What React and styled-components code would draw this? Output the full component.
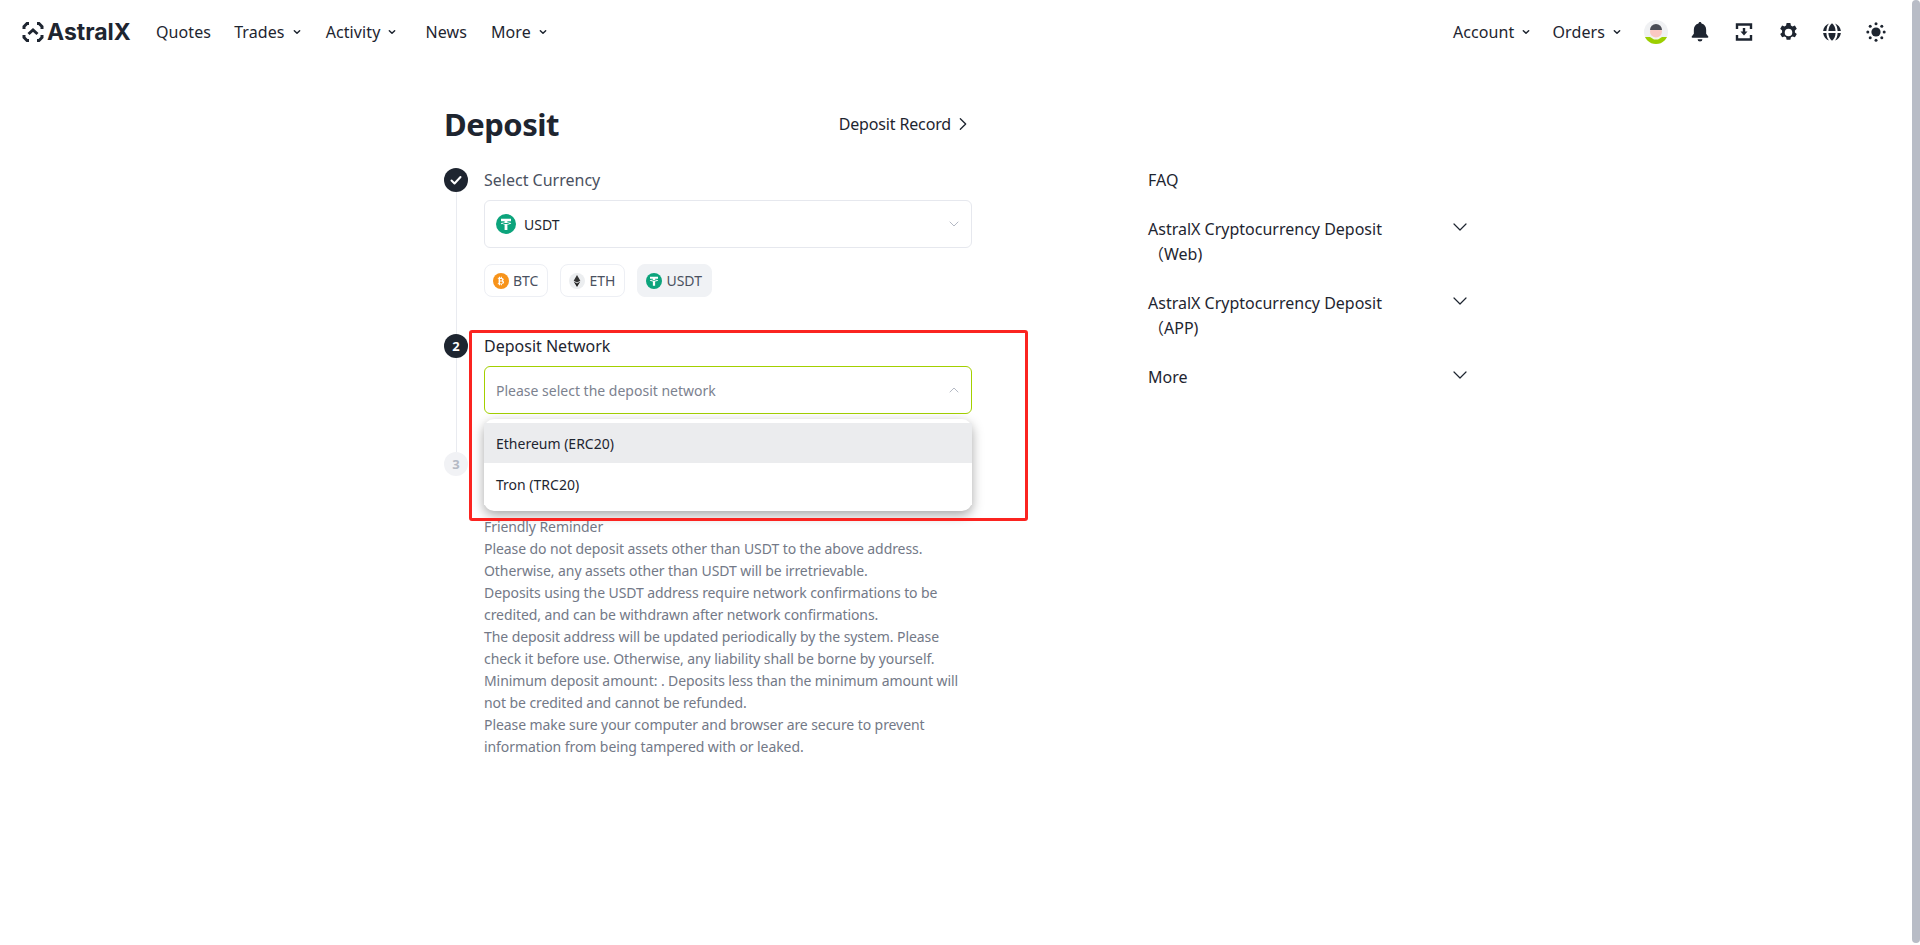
import React from "react";
import styled, { createGlobalStyle } from "styled-components";

const GlobalStyle = createGlobalStyle`
  html, body {
    margin: 0;
    padding: 0;
    background: #fff;
    overflow: hidden;
  }
  body {
    font-family: "Noto Sans", "Open Sans", "Liberation Sans", "Noto Sans CJK SC", sans-serif;
    color: #1e2530;
  }
  * { box-sizing: border-box; }
`;

const Page = styled.div`
  position: relative;
  width: 1920px;
  height: 945px;
  overflow: hidden;
`;

const ScrollThumb = styled.div`
  position: absolute;
  top: 0;
  right: 0;
  width: 8px;
  height: 943px;
  border-radius: 4px;
  background: #b8bcc6;
`;

const Header = styled.header`
  display: flex;
  align-items: center;
  justify-content: space-between;
  height: 64px;
  padding: 0 32px 0 22px;
`;

const NavLeft = styled.nav`
  display: flex;
  align-items: center;
`;

const NavRight = styled.div`
  display: flex;
  align-items: center;
`;

const Logo = styled.div`
  display: flex;
  align-items: center;
  gap: 3px;
  width: 134px;
  font-family: "Inter", sans-serif;
  font-size: 23px;
  font-weight: 700;
  color: #1e2530;
`;

const NavItem = styled.a`
  display: flex;
  align-items: center;
  gap: 8px;
  font-size: 16px;
  letter-spacing: 0.1px;
  color: #1e2530;
  margin-right: ${(p) => p.$gap}px;
`;

const IconSlot = styled.span`
  display: flex;
  align-items: center;
  justify-content: center;
  width: 24px;
  height: 24px;
  margin-left: 20px;
`;

const Main = styled.main`
  display: flex;
  width: 1032px;
  margin: 0 auto;
  padding-top: 29px;
`;

const LeftColumn = styled.section`
  width: 528px;
`;

const TitleRow = styled.div`
  display: flex;
  align-items: center;
  justify-content: space-between;
  height: 62px;
  margin-bottom: 13px;
`;

const Title = styled.h1`
  margin: 0;
  font-size: 31px;
  line-height: 62px;
  font-weight: 700;
  letter-spacing: -0.5px;
  color: #1e2530;
`;

const RecordLink = styled.a`
  display: flex;
  align-items: center;
  gap: 4px;
  padding-right: 1px;
  font-size: 16px;
  letter-spacing: -0.15px;
  color: #1e2530;
`;

const Step = styled.div`
  display: grid;
  grid-template-columns: 24px 1fr;
  column-gap: 16px;
  min-height: ${(p) => p.$height}px;
`;

const Rail = styled.div`
  display: flex;
  flex-direction: column;
  align-items: center;
`;

const RailLine = styled.div`
  flex: 1;
  width: 1px;
  background: #e9ebf0;
`;

const StepDot = styled.div`
  display: flex;
  align-items: center;
  justify-content: center;
  flex: none;
  width: 24px;
  height: 24px;
  border-radius: 50%;
  font-size: 13px;
  font-weight: 700;
  background: ${(p) => (p.$muted ? "#f1f2f5" : "#1e2530")};
  color: ${(p) => (p.$muted ? "#b4b9c4" : "#fff")};
`;

const StepBody = styled.div`
  position: relative;
  width: 488px;
`;

const StepTitle = styled.div`
  font-size: 16px;
  line-height: 24px;
  color: ${(p) => (p.$soft ? "#4a5160" : "#1e2530")};
`;

const SelectBox = styled.div`
  display: flex;
  align-items: center;
  justify-content: space-between;
  height: 48px;
  margin-top: 8px;
  padding: 0 11px;
  border: 1px solid ${(p) => (p.$active ? "#a3d000" : "#e6e8ee")};
  border-radius: 6px;
  font-size: 14px;
  background: #fff;
`;

const SelectValue = styled.span`
  display: flex;
  align-items: center;
  gap: 8px;
  color: #1e2530;
`;

const Placeholder = styled.span`
  font-size: 14px;
  color: #7c828f;
`;

const Chips = styled.div`
  display: flex;
  gap: 12px;
  margin-top: 16px;
`;

const Chip = styled.div`
  display: flex;
  align-items: center;
  gap: 4px;
  height: 33px;
  padding: 0 9px 0 8px;
  font-size: 14px;
  color: #4a5160;
  border-radius: 8px;
  border: 1px solid ${(p) => (p.$active ? "#f0f2f5" : "#edeff4")};
  background: ${(p) => (p.$active ? "#f0f2f5" : "#fff")};
`;

const Dropdown = styled.ul`
  position: absolute;
  top: 85px;
  left: 0;
  z-index: 3;
  width: 100%;
  margin: 0;
  padding: 4px 0 6px;
  list-style: none;
  background: #fff;
  border-radius: 10px;
  box-shadow: 0 4px 12px rgba(0, 0, 0, 0.35);
`;

const Option = styled.li`
  display: flex;
  align-items: center;
  height: ${(p) => (p.$hover ? 40 : 42)}px;
  padding: 0 12px;
  font-size: 14px;
  color: #1e2530;
  background: ${(p) => (p.$hover ? "#ebecee" : "#fff")};
`;

const Reminder = styled.div`
  width: 488px;
  margin: 0 0 0 40px;
  padding-top: 40px;
  font-size: 14px;
  line-height: 22px;
  letter-spacing: -0.08px;
  color: #737987;
`;

const Highlight = styled.div`
  position: absolute;
  left: 469px;
  top: 330px;
  width: 559px;
  height: 191px;
  border: 3px solid #fb2420;
  border-radius: 3px;
  z-index: 5;
  pointer-events: none;
`;

const FaqColumn = styled.aside`
  width: 322px;
  margin-left: 176px;
  padding-top: 75px;
  font-size: 16px;
  line-height: 25px;
`;

const FaqHeading = styled.div`
  margin-bottom: 24px;
`;

const FaqRow = styled.div`
  display: flex;
  justify-content: space-between;
  align-items: flex-start;
  margin-bottom: 24px;
`;

const FaqText = styled.div`
  width: 270px;
`;

const FaqArrow = styled.span`
  display: flex;
  margin: 1px 1px 0 0;
`;

const chevronPaths = {
  up: "M2 8l4-4 4 4",
  down: "M2 4l4 4 4-4",
  right: "M4 2l4 4-4 4",
};

const Chevron = ({ dir = "down", size = 12, color = "#1e2530", width = 2 }) => (
  <svg width={size} height={size} viewBox="0 0 12 12" fill="none">
    <path
      d={chevronPaths[dir]}
      stroke={color}
      strokeWidth={width}
      strokeLinecap="round"
      strokeLinejoin="round"
    />
  </svg>
);

const NavCaret = () => <Chevron size={8} width={2.2} />;

const LogoMark = () => (
  <svg width="22" height="22" viewBox="0 0 22 22" fill="none" stroke="#1e2530" strokeWidth="3">
    <path d="M7 2.5H5L2 5.5V8" />
    <path d="M15 2.5h2l3 3V8" />
    <path d="M7 19.5H5l-3-3V14" />
    <path d="M15 19.5h2l3-3V14" />
    <path d="M6.5 13L11 9l4.5 4" />
  </svg>
);

const Avatar = () => (
  <svg width="24" height="24" viewBox="0 0 24 24">
    <defs>
      <clipPath id="avatarClip">
        <circle cx="12" cy="12" r="12" />
      </clipPath>
    </defs>
    <g clipPath="url(#avatarClip)">
      <rect width="24" height="24" fill="#f0f1f3" />
      <rect y="17" width="24" height="7" fill="#9ccf00" />
      <path d="M6 17h12l-4 2.5h-4z" fill="#f4f6e8" />
      <circle cx="12" cy="11.5" r="6" fill="#fbc8c3" />
      <path d="M6 10a6 6 0 0 1 12 0z" fill="#4a4d55" />
    </g>
  </svg>
);

const Bell = () => (
  <svg width="22" height="22" viewBox="0 0 20 20" fill="#1e2530">
    <path d="M10 1c.8 0 1.3.6 1.4 1.3C14 3 15.6 5.2 15.6 8v3.6l1.9 2.6c.3.5 0 1.1-.6 1.1H3.1c-.6 0-.9-.6-.6-1.1l1.9-2.6V8c0-2.8 1.6-5 4.2-5.7C8.7 1.6 9.2 1 10 1z" />
    <path d="M7.8 16.5h4.4a2.2 2.2 0 0 1-4.4 0z" />
  </svg>
);

const DepositIcon = () => (
  <svg width="18" height="18" viewBox="0 0 18 18" fill="none" stroke="#1e2530" strokeWidth="2.4">
    <path d="M2 6V1.5h14V6M2 12v4.5h14V12" />
    <path d="M9 5v5" />
    <path d="M5.5 8.5h7L9 12.5z" fill="#1e2530" stroke="none" />
  </svg>
);

const Gear = () => (
  <svg width="21" height="21" viewBox="0 0 20 20">
    <path
      fill="#1e2530"
      fillRule="evenodd"
      d="M8.2 1h3.6l.5 2.4 1.5.8 2.3-.8 1.8 3.1-1.8 1.6v1.8l1.8 1.6-1.8 3.1-2.3-.8-1.5.8-.5 2.4H8.2l-.5-2.4-1.5-.8-2.3.8-1.8-3.1 1.8-1.6V8.1L2.1 6.5l1.8-3.1 2.3.8 1.5-.8zM10 6.4a3.6 3.6 0 1 0 0 7.2 3.6 3.6 0 0 0 0-7.2z"
    />
  </svg>
);

const Globe = () => (
  <svg width="20" height="20" viewBox="0 0 20 20" fill="#1e2530">
    <path d="M7 1.4C3.9 2.5 1.5 5.4 1.1 9h3.3c.1-3 1-5.8 2.6-7.6z" />
    <path d="M13 1.4c1.6 1.8 2.5 4.6 2.6 7.6h3.3c-.4-3.6-2.8-6.5-5.9-7.6z" />
    <path d="M10 1.3C7.8 3 6.5 5.8 6.4 9h7.2C13.5 5.8 12.2 3 10 1.3z" />
    <path d="M1.1 11c.4 3.6 2.8 6.5 5.9 7.6-1.6-1.8-2.5-4.6-2.6-7.6z" />
    <path d="M6.4 11c.1 3.2 1.4 6 3.6 7.7 2.2-1.7 3.5-4.5 3.6-7.7z" />
    <path d="M15.6 11c-.1 3-1 5.8-2.6 7.6 3.1-1.1 5.5-4 5.9-7.6z" />
  </svg>
);

const Sun = () => (
  <svg width="20" height="20" viewBox="0 0 20 20" fill="#1e2530">
    <circle cx="10" cy="10" r="4.6" />
    <circle cx="10" cy="1.8" r="1.5" />
    <circle cx="10" cy="18.2" r="1.5" />
    <circle cx="1.8" cy="10" r="1.5" />
    <circle cx="18.2" cy="10" r="1.5" />
    <circle cx="4.2" cy="4.2" r="1.5" />
    <circle cx="15.8" cy="4.2" r="1.5" />
    <circle cx="4.2" cy="15.8" r="1.5" />
    <circle cx="15.8" cy="15.8" r="1.5" />
  </svg>
);

const Tether = ({ size }) => (
  <svg width={size} height={size} viewBox="0 0 20 20">
    <circle cx="10" cy="10" r="10" fill="#0ca47c" />
    <path d="M5 4.8h10v2.4h-3.6v1.3c2 .1 3.8.5 3.8 1s-1.8.9-3.8 1V16H8.6v-5.5c-2-.1-3.8-.5-3.8-1s1.8-.9 3.8-1V7.2H5z" fill="#fff" />
    <path d="M6.3 9.5c.8.3 2.2.5 3.7.5s2.9-.2 3.7-.5c-.8-.3-2.2-.4-3.7-.4s-2.900.1-3.7.4z" fill="#0ca47c" />
  </svg>
);

const Bitcoin = () => (
  <svg width="16" height="16" viewBox="0 0 16 16">
    <circle cx="8" cy="8" r="8" fill="#f7931a" />
    <path
      fill="#fff"
      fillRule="evenodd"
      d="M6 3.8h1v1h.9v-1h1v1.1c1.2.2 1.8.8 1.8 1.6 0 .6-.3 1-.8 1.3.7.2 1.1.8 1.1 1.5 0 1-.8 1.700-2.100 1.800v1.100h-1v-1h-.9v1H6v-1H4.800v-1h.8V5.800h-.8v-1H6zm1 2.100v1.700h1.300c.6 0 .9-.3.9-.9s-.3-.8-.9-.8zm0 2.700v1.900h1.500c.7 0 1-.3 1-1s-.3-.9-1-.9z"
    />
  </svg>
);

const Ethereum = () => (
  <svg width="16" height="16" viewBox="0 0 16 16">
    <circle cx="8" cy="8" r="8" fill="#eceef0" />
    <path d="M8 2l3.3 5.7L8 9.600 4.700 7.700z" fill="#343434" />
    <path d="M8 10.600l3.300-2L8 14l-3.300-5.400z" fill="#1e1e1e" />
  </svg>
);

const Check = () => (
  <svg width="14" height="14" viewBox="0 0 14 14" fill="none">
    <path d="M2.5 7.5l3 3 6-6.500" stroke="#fff" strokeWidth="2" strokeLinecap="round" strokeLinejoin="round" />
  </svg>
);

const reminders = [
  "Friendly Reminder",
  "Please do not deposit assets other than USDT to the above address.",
  "Otherwise, any assets other than USDT will be irretrievable.",
  "Deposits using the USDT address require network confirmations to be credited, and can be withdrawn after network confirmations.",
  "The deposit address will be updated periodically by the system. Please check it before use. Otherwise, any liability shall be borne by yourself.",
  "Minimum deposit amount: . Deposits less than the minimum amount will not be credited and cannot be refunded.",
  "Please make sure your computer and browser are secure to prevent information from being tampered with or leaked.",
];

const faqs = [
  ["AstralX Cryptocurrency Deposit", "（Web)"],
  ["AstralX Cryptocurrency Deposit", "（APP)"],
  ["More"],
];

export default function App() {
  return (
    <Page>
      <GlobalStyle />
      <Header>
        <NavLeft>
          <Logo>
            <LogoMark />
            AstralX
          </Logo>
          <NavItem $gap={23}>Quotes</NavItem>
          <NavItem $gap={25}>Trades <NavCaret /></NavItem>
          <NavItem $gap={29}>Activity <NavCaret /></NavItem>
          <NavItem $gap={24}>News</NavItem>
          <NavItem>More <NavCaret /></NavItem>
        </NavLeft>
        <NavRight>
          <NavItem $gap={22}>Account <NavCaret /></NavItem>
          <NavItem $gap={3}>Orders <NavCaret /></NavItem>
          <IconSlot><Avatar /></IconSlot>
          <IconSlot><Bell /></IconSlot>
          <IconSlot><DepositIcon /></IconSlot>
          <IconSlot><Gear /></IconSlot>
          <IconSlot><Globe /></IconSlot>
          <IconSlot><Sun /></IconSlot>
        </NavRight>
      </Header>
      <Main>
        <LeftColumn>
          <TitleRow>
            <Title>Deposit</Title>
            <RecordLink>
              Deposit Record
              <Chevron dir="right" size={16} width={1} />
            </RecordLink>
          </TitleRow>
          <Step $height={166}>
            <Rail>
              <StepDot><Check /></StepDot>
              <RailLine />
            </Rail>
            <StepBody>
              <StepTitle $soft>Select Currency</StepTitle>
              <SelectBox>
                <SelectValue><Tether size={20} />USDT</SelectValue>
                <Chevron size={12} width={1} color="#b4b9c4" />
              </SelectBox>
              <Chips>
                <Chip><Bitcoin />BTC</Chip>
                <Chip><Ethereum />ETH</Chip>
                <Chip $active><Tether size={16} />USDT</Chip>
              </Chips>
            </StepBody>
          </Step>
          <Step $height={118}>
            <Rail>
              <StepDot>2</StepDot>
              <RailLine />
            </Rail>
            <StepBody>
              <StepTitle>Deposit Network</StepTitle>
              <SelectBox $active>
                <Placeholder>Please select the deposit network</Placeholder>
                <Chevron dir="up" size={12} width={1} color="#b4b9c4" />
              </SelectBox>
              <Dropdown>
                <Option $hover>Ethereum (ERC20)</Option>
                <Option>Tron (TRC20)</Option>
              </Dropdown>
            </StepBody>
          </Step>
          <Step $height={24}>
            <Rail>
              <StepDot $muted>3</StepDot>
            </Rail>
          </Step>
          <Reminder>
            {reminders.map((line) => (
              <div key={line}>{line}</div>
            ))}
          </Reminder>
        </LeftColumn>
        <FaqColumn>
          <FaqHeading>FAQ</FaqHeading>
          {faqs.map((lines, i) => (
            <FaqRow key={i}>
              <FaqText>
                {lines.map((l) => (
                  <div key={l}>{l}</div>
                ))}
              </FaqText>
              <FaqArrow><Chevron size={18} width={0.8} /></FaqArrow>
            </FaqRow>
          ))}
        </FaqColumn>
      </Main>
      <Highlight />
      <ScrollThumb />
    </Page>
  );
}
